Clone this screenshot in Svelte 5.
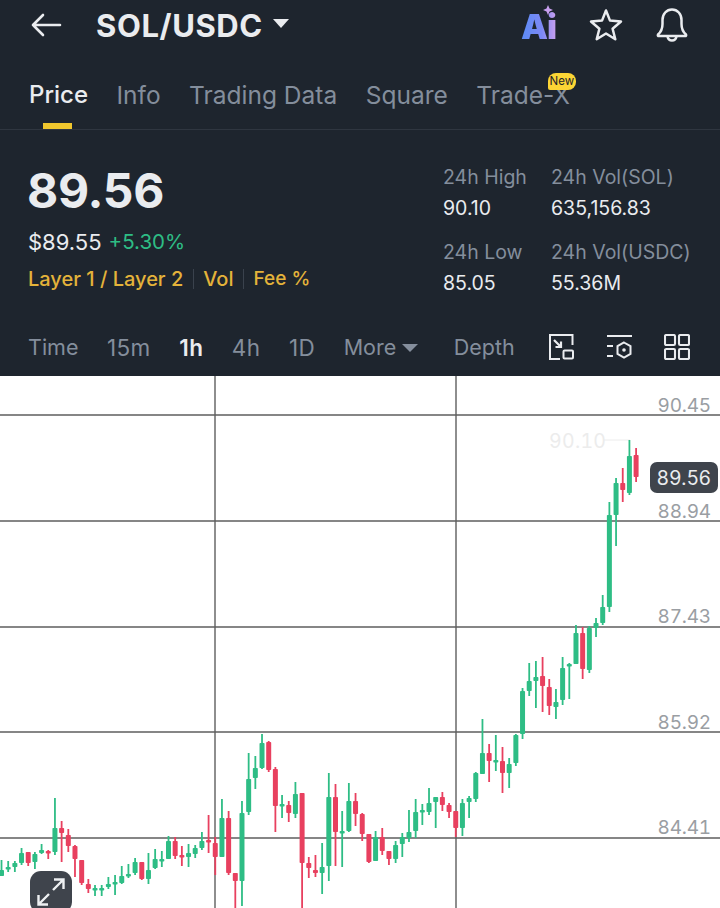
<script>
  const G = 'g', R = 'r';
  const raw = [
    [G,860,870,876,876],[G,861,867,869,872],[G,861,863,867,872],[G,848,853,863,865],[R,852,852,863,866],[G,852,854,862,869],[G,844,850,853,854],[R,850,851,853,859],
    [G,798,828,852,855],[R,821,828,833,862],[R,829,835,846,852],[R,845,846,859,877],[R,860,860,883,885],[R,879,884,889,893],[G,885,888,889,896],[G,885,888,889,896],
    [G,877,884,887,889],[G,875,882,883,895],[G,866,876,883,884],[G,864,874,875,878],[G,858,862,873,875],[R,862,862,879,880],[G,853,870,879,884],[G,849,859,868,869],
    [G,851,859,860,867],[G,836,841,859,859],[R,837,841,856,859],[R,846,855,857,866],[G,844,853,857,867],[G,845,848,854,858],[G,832,841,848,850],[R,815,840,842,853],
    [R,837,843,857,875],[G,799,818,857,857],[R,811,818,873,875],[R,873,873,881,912],[G,801,813,881,906],[G,753,779,812,815],[G,756,768,778,789],[G,734,743,768,769],
    [R,741,742,770,772],[R,767,769,806,832],[G,795,804,805,818],[R,801,805,813,822],[G,782,794,814,818],[R,793,793,863,912],[R,857,863,868,878],[R,855,870,873,877],
    [G,843,867,873,894],[G,773,797,866,881],[R,784,797,832,866],[G,811,831,832,867],[G,783,801,831,832],[R,793,801,814,826],[R,813,814,834,841],[R,834,834,862,863],
    [G,831,837,861,861],[R,828,837,851,855],[R,851,851,859,865],[G,841,845,859,863],[G,833,837,844,857],[G,810,832,838,842],[G,799,812,831,838],[G,804,810,811,825],
    [G,788,803,812,815],[G,797,797,802,828],[R,792,797,805,811],[R,803,805,812,818],[R,811,811,828,837],[G,799,803,828,836],[G,796,798,802,818],[G,772,773,799,802],
    [G,719,753,774,774],[R,744,753,761,782],[G,735,760,762,771],[R,747,761,773,793],[G,758,764,773,788],[G,734,735,763,766],[G,688,691,734,739],[G,663,681,691,696],
    [G,661,677,681,708],[R,657,676,686,712],[R,679,687,706,715],[G,689,702,707,719],[G,657,668,700,705],[G,663,664,666,699],[G,625,633,664,664],[R,627,633,669,679],
    [G,626,628,670,673],[G,618,623,628,637],[G,595,607,623,625],[G,502,515,607,612],[G,478,483,515,546],[R,468,483,490,502],[G,440,456,493,495],[R,448,455,477,482]
  ];
  const top = 376;
  const candles = raw.map((c, i) => ({
    x: 1.5 + i * 6.68,
    color: c[0] === G ? '#2ebd85' : '#e8405f',
    high: c[1] - top,
    open: c[2] - top,
    h: Math.max(c[3] - c[2], 2.5),
    low: c[4] - top
  }));
  const tabs = ['Info', 'Trading Data', 'Square'];
  const hLines = [415, 521, 627, 732, 838].map((y) => y - top);
  const vLines = [215, 456];
  const axis = [
    { v: '90.45', y: 405 }, { v: '88.94', y: 511 }, { v: '87.43', y: 616 }, { v: '85.92', y: 722 }, { v: '84.41', y: 827 }
  ];
  const times = ['15m', '1h', '4h', '1D'];
</script>

<div class="page">
  <section class="dark">
    <header class="top">
      <svg class="back" width="32" height="26" viewBox="0 0 32 26" fill="none" stroke="#eaecef" stroke-width="2.6" stroke-linecap="round" stroke-linejoin="round">
        <path d="M2 13H29M12 3L2 13L12 23"/>
      </svg>
      <h1>SOL/USDC</h1>
      <span class="caret big"></span>
      <div class="actions">
        <div class="ai">Ai
          <svg class="spark" width="10" height="10" viewBox="0 0 10 10"><path d="M5 0L6.5 3.5L10 5L6.5 6.5L5 10L3.5 6.5L0 5L3.5 3.5Z" fill="#c9a0f0"/></svg>
        </div>
        <svg width="34" height="34" viewBox="0 0 34 34" fill="none" stroke="#eaecef" stroke-width="2.5" stroke-linejoin="round">
          <path d="M17 2.5L21 12.6L32 13.5L23.6 20.7L26.3 31.2L17 25.5L7.7 31.2L10.4 20.7L2 13.5L13 12.6Z"/>
        </svg>
        <svg width="34" height="34" viewBox="0 0 34 34" fill="none" stroke="#eaecef" stroke-width="2.5" stroke-linecap="round" stroke-linejoin="round">
          <path d="M3 26.5C6 24 7.5 21 7.5 16V12C7.5 6 11.5 1.5 17 1.5S26.5 6 26.5 12V16C26.5 21 28 24 31 26.5C31.5 27.5 31 28 30 28H4C3 28 2.5 27.5 3 26.5Z"/>
          <path d="M12.5 28.5C13 31 15 32.5 17 32.5S21 31 21.5 28.5"/>
        </svg>
      </div>
    </header>

    <nav class="tabs">
      <span class="tab active">Price</span>
      {#each tabs as t}
        <span class="tab">{t}</span>
      {/each}
      <span class="tab trade">Trade-X<em class="new">New</em></span>
    </nav>

    <div class="stats">
      <div class="left">
        <div class="price">89.56</div>
        <div class="sub"><span class="usd">$89.55</span><span class="up">+5.30%</span></div>
        <div class="meta"><span>Layer 1 / Layer 2</span><i></i><span>Vol</span><i></i><span class="fee">Fee %</span></div>
      </div>
      <div class="right">
        <div class="cell"><label>24h High</label><b>90.10</b></div>
        <div class="cell"><label>24h Vol(SOL)</label><b>635,156.83</b></div>
        <div class="cell"><label>24h Low</label><b>85.05</b></div>
        <div class="cell"><label>24h Vol(USDC)</label><b>55.36M</b></div>
      </div>
    </div>

    <div class="bar">
      <span class="t">Time</span>
      {#each times as t}
        <span class="t num" class:on={t === '1h'}>{t}</span>
      {/each}
      <span class="t more">More<span class="caret small"></span></span>
      <span class="t depth">Depth</span>
      <div class="tools">
        <svg width="26" height="26" viewBox="0 0 26 26" fill="none" stroke="#eaecef" stroke-width="2">
          <path d="M11 25H1V1H23.5V11"/>
          <rect x="14.5" y="16.5" width="9.5" height="8" rx="1"/>
          <path d="M5 6L12 13M12 7.5V13H6.5" stroke-width="2.2"/>
        </svg>
        <svg width="27" height="26" viewBox="0 0 27 26" fill="none" stroke="#eaecef" stroke-width="2">
          <path d="M1 2H26M1 12H7M1 22H7"/>
          <path d="M18 8.5L24.5 12.2V19.8L18 23.5L11.5 19.8V12.2Z"/>
          <circle cx="18" cy="16" r="1.8" fill="#eaecef" stroke="none"/>
        </svg>
        <svg width="26" height="26" viewBox="0 0 26 26" fill="none" stroke="#eaecef" stroke-width="2.1">
          <rect x="1" y="1" width="10" height="10" rx="1.2"/><rect x="15" y="1" width="10" height="10" rx="1.2"/>
          <rect x="1" y="15" width="10" height="10" rx="1.2"/><rect x="15" y="15" width="10" height="10" rx="1.2"/>
        </svg>
      </div>
    </div>
  </section>

  <section class="chart">
    <svg class="plot" width="720" height="532" viewBox="0 0 720 532">
      {#each hLines as y}
        <line x1="0" x2="720" y1={y} y2={y} stroke="#5e5e5e" stroke-width="1.4"/>
      {/each}
      {#each vLines as x}
        <line x1={x} x2={x} y1="0" y2="532" stroke="#5e5e5e" stroke-width="1.4"/>
      {/each}
      <line x1="604" x2="630" y1="64" y2="64" stroke="#ececec" stroke-width="1"/>
      {#each candles as c}
        <line x1={c.x} x2={c.x} y1={c.high} y2={c.low} stroke={c.color} stroke-width="1.8"/>
        <rect x={c.x - 2.5} y={c.open} width="5" height={c.h} rx="0.8" fill={c.color}/>
      {/each}
    </svg>
    {#each axis as a}
      <span class="axis" style="top: {a.y - 376 - 11}px">{a.v}</span>
    {/each}
    <span class="hi">90.10</span>
    <span class="tag">89.56</span>
    <button class="expand" aria-label="Expand">
      <svg width="30" height="30" viewBox="0 0 30 30" fill="none" stroke="#eef0f2" stroke-width="2.4">
        <path d="M17 13L27 3M18 2.5H27.5V12M13 17L3 27M2.5 18V27.5H12"/>
      </svg>
    </button>
  </section>
</div>

<style>
  :global(body) { margin: 0; background: #fff; }
  .page { width: 720px; height: 908px; overflow: hidden; font-family: Inter, "Liberation Sans", sans-serif; }
  .dark { height: 376px; background: #1e252e; color: #eaecef; box-sizing: border-box; }
  .top { height: 50px; display: flex; align-items: center; padding: 0 31px 0 31px; box-sizing: border-box; }
  .back { margin-right: 33px; }
  h1 { margin: 0; font-size: 31px; font-weight: 700; letter-spacing: 0.6px; color: #eaecef; }
  .caret { display: inline-block; width: 0; height: 0; border-style: solid; border-color: #eaecef transparent transparent; }
  .caret.big { border-width: 9px 8px 0; margin: -4px 0 0 10px; }
  .caret.small { border-width: 8px 8px 0; border-top-color: #848e9c; margin-left: 6px; vertical-align: 3px; }
  .actions { margin-left: auto; display: flex; align-items: center; gap: 32px; }
  .ai { position: relative; font-size: 34px; font-weight: 900; line-height: 34px; letter-spacing: -1px; background: linear-gradient(90deg, #5a8cf5, #7d88f5 60%, #c9a0f0); -webkit-background-clip: text; background-clip: text; color: transparent; margin-right: 1px; padding-top: 4px; }
  .spark { position: absolute; right: 3px; top: -1px; }
  .tabs { height: 79px; padding: 10px 0 0 29px; display: flex; gap: 28.5px; align-items: center; border-bottom: 1px solid #2f3640; box-sizing: border-box; margin-top: 1px; }
  .tab { font-size: 24.5px; font-weight: 400; color: #848e9c; position: relative; line-height: 30px; }
  .tab.active { color: #eaecef; font-weight: 500; font-size: 24px; }
  .tab.active::after { content: ""; position: absolute; left: 14px; bottom: -19px; width: 29px; height: 6px; background: #f0c72e; }
  .new { position: absolute; right: -6px; top: -7px; background: #fcd535; color: #1e2329; font-style: normal; font-size: 11.5px; line-height: 17px; padding: 0 2px; border-radius: 8px 8px 8px 2px; }
  .stats { display: flex; justify-content: space-between; height: 190px; padding: 0 0 0 28px; }
  .left { padding-top: 31px; }
  .price { font-size: 48px; font-weight: 700; line-height: 60px; letter-spacing: -0.3px; margin-left: -1px; }
  .sub { display: flex; gap: 7px; font-size: 20.5px; line-height: 26px; margin-top: 8px; }
  .usd { font-size: 22px; }
  .up { color: #2ebd85; }
  .meta { display: flex; align-items: center; gap: 9.5px; margin-top: 12px; font-size: 20px; font-weight: 500; line-height: 24px; color: #e4b33a; }
  .fee { font-size: 19px; }
  .meta i { width: 1px; height: 20px; background: #3a424d; }
  .right { display: grid; grid-template-columns: 108px 169px; grid-auto-rows: 75px; padding-top: 34px; }
  .cell { display: flex; flex-direction: column; gap: 5px; }
  .cell label { font-size: 19.5px; line-height: 26px; color: #848e9c; }
  .cell b { font-size: 19.5px; line-height: 26px; font-weight: 400; color: #eaecef; }
  .bar { height: 54px; display: flex; align-items: center; gap: 28.5px; padding: 0 30px 0 28px; box-sizing: border-box; }
  .t { font-size: 21.5px; color: #848e9c; white-space: nowrap; }
  .t.num { font-size: 22.5px; letter-spacing: 0.4px; }
  .t.on { color: #eaecef; font-weight: 600; }
  .depth { margin-left: 7px; }
  .tools { margin-left: auto; display: flex; gap: 31px; }
  .chart { position: relative; height: 532px; background: #fff; overflow: hidden; }
  .plot { display: block; }
  .axis { position: absolute; right: 9px; font-size: 19px; line-height: 24px; color: #9a9ea3; letter-spacing: -0.2px; font-variant-numeric: tabular-nums; }
  .hi { position: absolute; left: 549px; top: 53px; font-size: 19.5px; line-height: 24px; color: #ececec; letter-spacing: 0.3px; font-variant-numeric: tabular-nums; }
  .tag { position: absolute; left: 650px; top: 86px; width: 68px; height: 31px; line-height: 32px; text-align: center; border-radius: 7px; background: #3f444c; color: #eaecef; font-size: 19.5px; letter-spacing: 0.3px; }
  .expand { position: absolute; left: 30px; top: 495px; width: 42px; height: 42px; padding: 6px; border: 0; border-radius: 11px; background: #3f444c; box-sizing: border-box; }
  .expand svg { display: block; }
</style>
